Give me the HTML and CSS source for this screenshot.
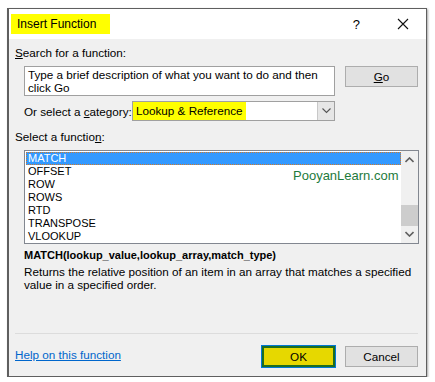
FILE: index.html
```html
<!DOCTYPE html>
<html lang="en">
<head>
    <meta charset="UTF-8">
    <meta name="viewport" content="width=device-width, initial-scale=1.0">
    <title>Insert Function</title>
    <link rel="stylesheet" href="styles.css">
</head>
<body>
    <div class="dialog">
        <div class="titlebar">
            <span class="title mark">Insert Function</span>
            <span class="help-btn">?</span>
            <span class="close-btn">
                <svg width="12" height="12" viewBox="0 0 12 12"><path d="M1 1 L11 11 M11 1 L1 11" stroke="#111" stroke-width="1.1" fill="none"/></svg>
            </span>
        </div>
        <div class="content">
            <div class="label"><u>S</u>earch for a function:</div>
            <div class="search-row">
                <div class="textbox">Type a brief description of what you want to do and then click Go</div>
                <button class="btn go"><u>G</u>o</button>
            </div>
            <div class="category-row">
                <span class="category-label">Or select a <u>c</u>ategory:</span>
                <div class="dropdown">
                    <span class="mark">Lookup &amp; Reference</span>
                    <span class="drop-arrow">
                        <svg width="9" height="6" viewBox="0 0 9 6"><path d="M0.5 0.5 L4.5 4.5 L8.5 0.5" stroke="#555" stroke-width="1.1" fill="none"/></svg>
                    </span>
                </div>
            </div>
            <div class="label">Select a functio<u>n</u>:</div>
            <div class="listbox">
                <ul class="items">
                    <li class="selected">MATCH</li>
                    <li>OFFSET</li>
                    <li>ROW</li>
                    <li>ROWS</li>
                    <li>RTD</li>
                    <li>TRANSPOSE</li>
                    <li>VLOOKUP</li>
                </ul>
                <div class="watermark">PooyanLearn.com</div>
                <div class="scrollbar">
                    <svg class="arrow" width="9" height="6" viewBox="0 0 9 6"><path d="M0.5 5 L4.5 1 L8.5 5" stroke="#606060" stroke-width="1.6" fill="none"/></svg>
                    <div class="track"><div class="thumb"></div></div>
                    <svg class="arrow" width="9" height="6" viewBox="0 0 9 6"><path d="M0.5 1 L4.5 5 L8.5 1" stroke="#606060" stroke-width="1.6" fill="none"/></svg>
                </div>
            </div>
            <div class="syntax">MATCH(lookup_value,lookup_array,match_type)</div>
            <div class="desc">Returns the relative position of an item in an array that matches a specified value in a specified order.</div>
        </div>
        <div class="footer">
            <a href="#" class="help-link">Help on this function</a>
            <button class="btn ok">OK</button>
            <button class="btn cancel">Cancel</button>
        </div>
    </div>
</body>
</html>
```

FILE: styles.css
```css
body {
    margin: 0;
    background: #fff;
    font-family: "Liberation Sans", Arial, sans-serif;
    font-size: 11.7px;
    color: #000;
}
.dialog {
    box-sizing: border-box;
    width: 420px;
    height: 369px;
    margin: 8px 0 0 7px;
    border: 1px solid #5f5f5f;
    border-left-width: 2px;
    box-shadow: 1px 1px 2px rgba(0, 0, 0, 0.35);
    background: #f0f0f0;
    display: flex;
    flex-direction: column;
}
.mark {
    background: #ffff00;
}
.titlebar {
    height: 30px;
    background: #fff;
    display: flex;
    align-items: center;
    font-size: 12px;
}
.title {
    margin-left: 2px;
    height: 20px;
    line-height: 20px;
    padding: 0 6px;
    width: 87px;
}
.help-btn {
    margin-left: auto;
    font-size: 13px;
    margin-right: 37px;
}
.close-btn {
    display: flex;
    margin-right: 17px;
}
.content {
    padding: 7px 8px 0 6px;
    flex: 1;
}
.label {
    height: 14px;
    line-height: 14px;
}
.search-row {
    display: flex;
    margin: 6px 0 0 9px;
    gap: 10px;
}
.textbox {
    box-sizing: border-box;
    width: 311px;
    height: 30px;
    background: #fff;
    border: 1px solid #a0a0a0;
    padding: 1px 3px;
    line-height: 13px;
}
.btn {
    box-sizing: border-box;
    width: 73px;
    height: 21px;
    font-family: inherit;
    font-size: 11.7px;
    background: #e1e1e1;
    border: 1px solid #adadad;
    padding: 0;
}
.category-row {
    display: flex;
    align-items: center;
    margin: 5px 0 0 9px;
    gap: 4px;
}
.category-label {
    width: 104px;
    white-space: nowrap;
}
.dropdown {
    box-sizing: border-box;
    width: 203px;
    height: 20px;
    background: #fff;
    border: 1px solid #a0a0a0;
    display: flex;
    align-items: stretch;
}
.dropdown .mark {
    width: 110px;
    padding-left: 3px;
    line-height: 18px;
}
.drop-arrow {
    margin-left: auto;
    width: 16px;
    background: #e6e6e6;
    border-left: 1px solid #c8c8c8;
    display: flex;
    align-items: center;
    justify-content: center;
}
.category-row + .label {
    margin-top: 9px;
}
.listbox {
    box-sizing: border-box;
    position: relative;
    margin: 6px 0 0 9px;
    width: 395px;
    height: 94px;
    background: #fff;
    border: 1px solid #828790;
    display: flex;
}
.items {
    list-style: none;
    margin: 0;
    padding: 1px 0 0 1px;
    flex: 1;
    font-size: 11px;
}
.items li {
    height: 13px;
    line-height: 13px;
    padding-left: 2px;
}
.items .selected {
    background: #3399ff;
    color: #fff;
    outline: 1px dotted #d27a2a;
    outline-offset: -1px;
}
.watermark {
    position: absolute;
    left: 268px;
    top: 17px;
    color: #1e7a3c;
    font-size: 13px;
}
.scrollbar {
    width: 17px;
    background: #f0f0f0;
    display: flex;
    flex-direction: column;
    align-items: center;
}
.scrollbar .arrow {
    margin: 6px 0;
}
.track {
    flex: 1;
    width: 100%;
    position: relative;
}
.thumb {
    position: absolute;
    left: 0;
    right: 0;
    top: 36px;
    height: 21px;
    background: #cdcdcd;
}
.syntax {
    margin: 4px 0 0 9px;
    font-weight: bold;
    font-size: 11px;
    line-height: 14px;
}
.desc {
    margin: 3px 0 0 9px;
    line-height: 13px;
    width: 395px;
}
.footer {
    margin: 0 8px 0 6px;
    border-top: 1px solid #dcdcdc;
    height: 42px;
    display: flex;
    align-items: center;
    gap: 10px;
}
.help-link {
    color: #0066cc;
    margin-right: auto;
    margin-top: -2px;
}
.btn.ok {
    background: #e6d800;
    border: 2px solid #1f6e1f;
    outline: 1px solid #0078d7;
    margin-top: 2px;
}
.btn.cancel {
    margin-top: 2px;
}
```
